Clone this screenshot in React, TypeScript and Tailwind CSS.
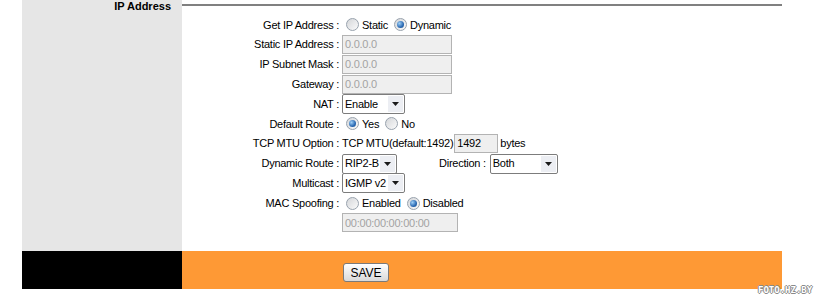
import React from "react";

const Radio = ({ checked = false }: { checked?: boolean }) => (
  <span className="inline-flex shrink-0 items-center justify-center w-[13px] h-[13px] rounded-full border border-[#98a2ad] bg-linear-to-br from-[#d4d6d9] to-[#fbfbfb]">
    {checked && (
      <span className="w-[7px] h-[7px] rounded-full bg-[radial-gradient(circle_at_35%_35%,#9fd0f7,#2a69b3_60%,#174a86)]" />
    )}
  </span>
);

const RadioGroup = ({ options, selected }: { options: string[]; selected: number }) => (
  <div className="flex items-center pl-[4px]">
    {options.map((opt, i) => (
      <div key={opt} className={`flex items-center ${i > 0 ? "ml-[6px]" : ""}`}>
        <Radio checked={i === selected} />
        <span className="ml-[3px]">{opt}</span>
      </div>
    ))}
  </div>
);

const TextBox = ({ value, width, dim = true }: { value: string; width: string; dim?: boolean }) => (
  <div
    className={`flex items-center h-[19px] border border-[#b3b3b3] bg-[#efefef] pl-[2px] ${width} ${
      dim ? "text-[#a3a3a3]" : "text-black"
    }`}
  >
    {value}
  </div>
);

const Select = ({ value, width }: { value: string; width: string }) => (
  <div className={`flex items-center h-[20px] border border-[#7c7c7c] rounded-[2px] bg-white ${width}`}>
    <span className="flex-1 pl-[2px]">{value}</span>
    <span className="flex items-center justify-center w-[15px] h-[16px] mr-[1px] bg-[#eceef3]">
      <svg width="7" height="4" viewBox="0 0 7 4">
        <path d="M0 0h7L3.5 4z" fill="#1a1a1a" />
      </svg>
    </span>
  </div>
);

const Row = ({ label, children }: { label: string; children?: React.ReactNode }) => (
  <div className="grid grid-cols-[157px_1fr] items-center h-[19.8px]">
    <div className="text-right whitespace-nowrap">{label}</div>
    <div className="flex items-center pl-[3px] whitespace-nowrap">{children}</div>
  </div>
);

export default function App() {
  return (
    <div className="relative w-[817px] h-[297px] bg-white overflow-hidden font-['Liberation_Sans',Arial,sans-serif] text-[11px] tracking-[-0.25px] text-black">
      <div className="pl-[22px]">
        {/* top section */}
        <div className="flex h-[251px]">
          <div className="w-[160px] bg-[#e6e6e6] text-right pr-[11px]">
            <span className="font-bold leading-[12px] block tracking-normal">IP Address</span>
          </div>
          <div className="w-[600px]">
            <div className="mt-[4px] h-[2px] bg-[#808080]" />
            <div className="mt-[9px]">
              <Row label="Get IP Address :">
                <RadioGroup options={["Static", "Dynamic"]} selected={1} />
              </Row>
              <Row label="Static IP Address :">
                <TextBox value="0.0.0.0" width="w-[110px]" />
              </Row>
              <Row label="IP Subnet Mask :">
                <TextBox value="0.0.0.0" width="w-[110px]" />
              </Row>
              <Row label="Gateway :">
                <TextBox value="0.0.0.0" width="w-[110px]" />
              </Row>
              <Row label="NAT :">
                <Select value="Enable" width="w-[63px]" />
              </Row>
              <Row label="Default Route :">
                <RadioGroup options={["Yes", "No"]} selected={0} />
              </Row>
              <Row label="TCP MTU Option :">
                <span>TCP MTU(default:1492)</span>
                <div className="ml-[1px]">
                  <TextBox value="1492" width="w-[44px]" dim={false} />
                </div>
                <span className="ml-[2px]">bytes</span>
              </Row>
              <Row label="Dynamic Route :">
                <Select value="RIP2-B" width="w-[55px]" />
                <span className="ml-[42px]">Direction :</span>
                <div className="ml-[4px]">
                  <Select value="Both" width="w-[68px]" />
                </div>
              </Row>
              <Row label="Multicast :">
                <Select value="IGMP v2" width="w-[63px]" />
              </Row>
              <Row label="MAC Spoofing :">
                <RadioGroup options={["Enabled", "Disabled"]} selected={1} />
              </Row>
              <Row label="">
                <TextBox value="00:00:00:00:00:00" width="w-[116px]" />
              </Row>
            </div>
          </div>
        </div>

        {/* bottom bar */}
        <div className="flex h-[38px]">
          <div className="w-[160px] bg-black" />
          <div className="w-[600px] bg-[#fe9935] pl-[161px] pt-[12px]">
            <button className="h-[19px] w-[46px] rounded-[3px] border border-[#7a7a7a] bg-linear-to-b from-white to-[#d9d9d9] text-[12px] leading-none tracking-normal text-black">
              SAVE
            </button>
          </div>
        </div>
      </div>

      {/* watermark */}
      <div className="absolute left-[758px] top-[285px] text-[9px] leading-[10px] font-bold tracking-normal text-white [text-shadow:1px_0_0_#8a8a8a,-1px_0_0_#8a8a8a,0_1px_0_#8a8a8a,0_-1px_0_#8a8a8a] font-['DejaVu_Sans_Mono',monospace]">
        FOTO.HZ.BY
      </div>
    </div>
  );
}
